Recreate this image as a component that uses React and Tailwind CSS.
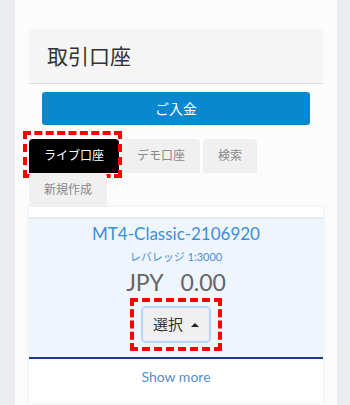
const font = { fontFamily: 'Lato, "Noto Sans CJK JP", sans-serif' };

const Tab = ({ label, active, marked }) => (
  <div className="relative mr-[3px]">
    <div
      className={`h-[34px] px-[15px] flex items-center rounded-t-[4px] text-[12px] ${
        active ? 'bg-black text-white' : 'bg-[#f0f0f0] text-[#888]'
      }`}
    >
      {label}
    </div>
    {marked && (
      <div className="absolute -top-[8px] -left-[6px] -right-[3px] -bottom-[5px] border-[4px] border-dashed border-[#ff0000] pointer-events-none" />
    )}
  </div>
);

export default function App() {
  return (
    <div className="min-h-screen bg-[#ebedf0] pl-[15px] pr-[13px]" style={font}>
      <div className="min-h-screen bg-[#fcfcfc] pt-[29px] px-[14px]">
        <div className="h-[55px] bg-[#f5f5f5] border-b border-[#dedede] rounded-t-[4px] pl-[18px] flex items-center text-[21px] text-[#333]">
          取引口座
        </div>

        <div className="mt-[8px] mx-[13px] h-[33px] bg-[#0a88cf] rounded-[3px] flex items-center justify-center text-white text-[14px]">
          ご入金
        </div>

        <div className="mt-[14px] flex flex-wrap">
          <Tab label="ライブ口座" active marked />
          <Tab label="デモ口座" />
          <Tab label="検索" />
          <Tab label="新規作成" />
        </div>

        <div className="bg-white shadow-[0_0_5px_rgba(0,0,0,0.08)]">
          <div className="h-[12px] border-b-2 border-[#e6eaf0]" />
          <div className="bg-[#eff5fd] pt-[3px] pb-[14px] flex flex-col items-center">
            <div className="text-[17px] leading-[24px] text-[#3a8fd4]">MT4-Classic-2106920</div>
            <div className="mt-[3px] text-[11px] leading-[15px] text-[#4a8fd0]">レバレッジ 1:3000</div>
            <div className="mt-[3px] text-[23px] leading-[30px] text-[#666] whitespace-pre">JPY   0.00</div>
            <div className="relative mt-[9px]">
              <div className="h-[37px] px-[10px] flex items-center gap-[8px] bg-[#efefef] border-2 border-[#b8d6fb] rounded-[5px] text-[15px] text-[#333]">
                <span>選択</span>
                <span className="w-0 h-0 border-l-[4px] border-r-[4px] border-b-[4px] border-l-transparent border-r-transparent border-b-[#222]" />
              </div>
              <div className="absolute -top-[8px] -left-[11px] -right-[11px] -bottom-[8px] border-[4px] border-dashed border-[#ff0000] pointer-events-none" />
            </div>
          </div>
          <div className="h-[2px] bg-[#1b3c8c]" />
          <div className="pt-[8px] pb-[16px] text-center text-[14px] leading-[20px] text-[#5a8dc4]">Show more</div>
        </div>
      </div>
    </div>
  );
}
